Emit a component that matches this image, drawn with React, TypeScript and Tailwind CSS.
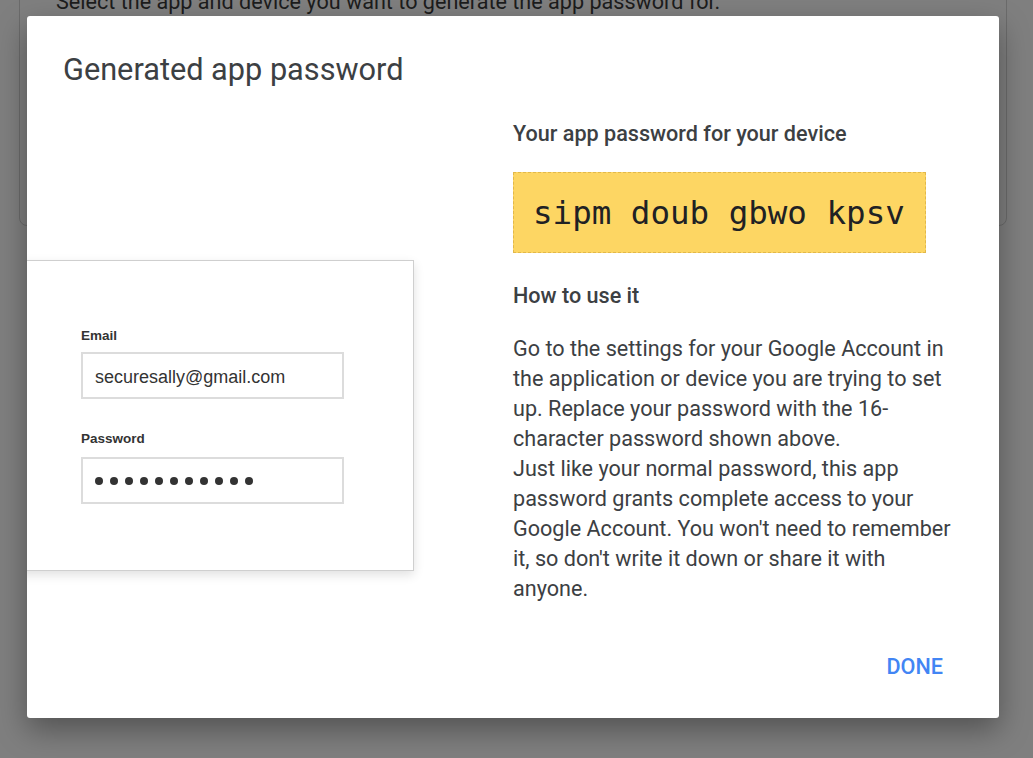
import React from "react";

export default function App() {
  const dots = Array.from({ length: 11 });
  return (
    <div
      className="relative h-[758px] w-[1033px] overflow-hidden bg-[#7f7f7f]"
      style={{ fontFamily: "Roboto, 'Noto Sans', sans-serif" }}
    >
      {/* background page card, dimmed */}
      <div className="ml-[19px] mr-[26px] mt-[-40px] h-[266px] rounded-b-[8px] border border-[#6b6b6b] pl-[36px] pt-[27px]">
        <div className="text-[21.6px] leading-[28px] text-[#1c1c1c]">
          Select the app and device you want to generate the app password for.
        </div>
      </div>

      {/* dialog */}
      <div className="absolute left-[27px] top-[16px] flex h-[702px] w-[972px] flex-col overflow-hidden rounded-[3px] bg-white shadow-[0_12px_30px_rgba(0,0,0,0.35)]">
        <div className="pl-[36px] pt-[35px] text-[30.7px] leading-[38px] text-[#3c4043]">
          Generated app password
        </div>

        <div className="mt-[32px] flex">
          {/* illustration */}
          <div className="w-[486px] shrink-0">
            <div
              className="ml-[-20px] mt-[139px] h-[311px] w-[407px] border border-[#cfcfcf] bg-white pl-[73px] shadow-[0_4px_10px_rgba(0,0,0,0.12)]"
              style={{ fontFamily: "'Liberation Sans', Arial, sans-serif" }}
            >
              <div className="mt-[67px] text-[13.5px] font-bold leading-[16px] text-[#333]">Email</div>
              <div className="mt-[8px] flex h-[47px] w-[263px] items-center border-2 border-[#dcdcdc] pl-[12px] pt-[3px] text-[18px] text-[#333]">
                securesally@gmail.com
              </div>
              <div className="mt-[32px] text-[13.5px] font-bold leading-[16px] text-[#333]">Password</div>
              <div className="mt-[10px] flex h-[47px] w-[263px] items-center gap-[7px] border-2 border-[#dcdcdc] pl-[12px]">
                {dots.map((_, i) => (
                  <span key={i} className="h-[8px] w-[8px] rounded-full bg-[#333]" />
                ))}
              </div>
            </div>
          </div>

          {/* right column */}
          <div className="w-[445px]">
            <div className="text-[21.6px] font-medium leading-[26px] text-[#3c4043]">
              Your app password for your device
            </div>
            <div className="mt-[25px] flex h-[81px] w-[413px] items-center border border-dashed border-[#e2b84a] bg-[#fdd663] pl-[19px]">
              <span
                className="text-[32.5px] leading-[40px] text-[#202124]"
                style={{ fontFamily: "'DejaVu Sans Mono', monospace" }}
              >
                sipm doub gbwo kpsv
              </span>
            </div>
            <div className="mt-[30px] text-[21.6px] font-medium leading-[26px] text-[#3c4043]">
              How to use it
            </div>
            <div className="mt-[25px] text-[21.6px] leading-[30px] text-[#3c4043]">
              <div>
                Go to the settings for your Google Account in the application or device you are trying to set
                up. Replace your password with the 16-character password shown above.
              </div>
              <div>
                Just like your normal password, this app password grants complete access to your Google
                Account. You won't need to remember it, so don't write it down or share it with anyone.
              </div>
            </div>
          </div>
        </div>

        <div className="mt-auto flex justify-end pb-[39px] pr-[56px]">
          <span className="text-[21.6px] font-medium leading-[24px] text-[#4285f4]">DONE</span>
        </div>
      </div>
    </div>
  );
}
